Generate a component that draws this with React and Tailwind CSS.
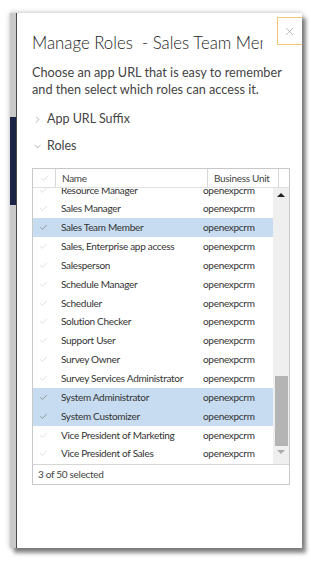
import { Check, ChevronRight, ChevronDown, X } from "lucide-react";

const roles = [
  { name: "Resource Manager", sel: false },
  { name: "Sales Manager", sel: false },
  { name: "Sales Team Member", sel: true },
  { name: "Sales, Enterprise app access", sel: false },
  { name: "Salesperson", sel: false },
  { name: "Schedule Manager", sel: false },
  { name: "Scheduler", sel: false },
  { name: "Solution Checker", sel: false },
  { name: "Support User", sel: false },
  { name: "Survey Owner", sel: false },
  { name: "Survey Services Administrator", sel: false },
  { name: "System Administrator", sel: true },
  { name: "System Customizer", sel: true },
  { name: "Vice President of Marketing", sel: false },
  { name: "Vice President of Sales", sel: false },
];

function RoleRow({ role }) {
  return (
    <div
      className={
        "flex h-[18.85px] items-center " + (role.sel ? "bg-[#c7dcf0]" : "")
      }
    >
      <div className="flex w-[21px] justify-center">
        <Check
          size={9}
          strokeWidth={1.5}
          className={role.sel ? "text-[#666]" : "text-[#c4c4c4]"}
        />
      </div>
      <div className="w-[149px] truncate pl-[7px] text-[#333]">{role.name}</div>
      <div className="text-[#333]">openexpcrm</div>
    </div>
  );
}

export default function App() {
  return (
    <div
      className="relative h-[561px] w-[311px] overflow-hidden bg-white pl-[10px] pt-[13px]"
      style={{ fontFamily: 'Lato, "Open Sans", sans-serif' }}
    >
      <div className="flex h-[535px] w-[292px] shadow-[0_0_5px_rgba(0,0,0,0.3),4px_5px_4px_rgba(0,0,0,0.45)]">
        {/* left strip of the page behind */}
        <div className="flex w-[6px] flex-col">
          <div className="h-[104px] bg-[#c9c9c9]" />
          <div className="h-[88px] bg-[#1b2447]" />
          <div className="flex-1 bg-[#c9c9c9]" />
        </div>
        <div className="w-px bg-[#4a4a4a]" />

        <div className="relative flex-1 overflow-hidden bg-white pl-[15px] pt-[18px]">
          <button className="absolute right-[-7px] top-[4px] flex h-[28px] w-[32px] items-center justify-center border-[1.5px] border-[#f3c873] bg-white pr-[7px]">
            <X size={13} strokeWidth={1} className="text-[#8a8a8a]" />
          </button>

          <h1 className="w-[231px] overflow-hidden whitespace-pre text-[16.8px] font-light leading-[24px] text-[#222]">
            {"Manage Roles  - Sales Team Member"}
          </h1>

          <p className="mt-[9px] text-[12.7px] leading-[17px] text-[#444]">
            Choose an app URL that is easy to remember
            <br />
            and then select which roles can access it.
          </p>

          <div className="mt-[12px] flex h-[18px] items-center text-[12.5px] text-[#444]">
            <ChevronRight size={11} strokeWidth={1.2} className="mr-[4px] text-[#777]" />
            App URL Suffix
          </div>
          <div className="mt-[9px] flex h-[18px] items-center text-[12.5px] text-[#444]">
            <ChevronDown size={11} strokeWidth={1.2} className="mr-[4px] text-[#777]" />
            Roles
          </div>

          <div className="mt-[13px] w-[258px] border border-[#c8c8c8] text-[10px] tracking-[-0.3px]">
            <div className="flex h-[19px] items-center border-b border-[#e0e0e0] text-[#444]">
              <div className="flex h-full w-[23px] items-center justify-center border-r border-[#d6d6d6]">
                <Check size={9} strokeWidth={1.5} className="text-[#c4c4c4]" />
              </div>
              <div className="flex h-full w-[152px] items-center border-r border-[#d6d6d6] pl-[6px]">
                Name
              </div>
              <div className="flex h-full w-[71px] items-center border-r border-[#d6d6d6] pl-[6px]">
                Business Unit
              </div>
              <div className="flex-1" />
            </div>

            <div className="flex h-[276px]">
              <div className="flex-1 overflow-hidden">
                <div className="-mt-[7.4px]">
                  {roles.map((r) => (
                    <RoleRow key={r.name} role={r} />
                  ))}
                </div>
              </div>
              <div className="flex w-[16px] flex-col items-center bg-[#efefef] py-[5px]">
                <div className="h-0 w-0 border-x-[4px] border-b-[4px] border-x-transparent border-b-[#222]" />
                <div className="mt-[179px] h-[70px] w-[13px] bg-[#b4b4b4]" />
                <div className="mt-[4px] h-0 w-0 border-x-[4px] border-t-[4px] border-x-transparent border-t-[#aaa]" />
              </div>
            </div>

            <div className="flex h-[20px] items-center border-t border-[#d6d6d6] pl-[5px] text-[#444]">
              3 of 50 selected
            </div>
          </div>
        </div>
      </div>
    </div>
  );
}
